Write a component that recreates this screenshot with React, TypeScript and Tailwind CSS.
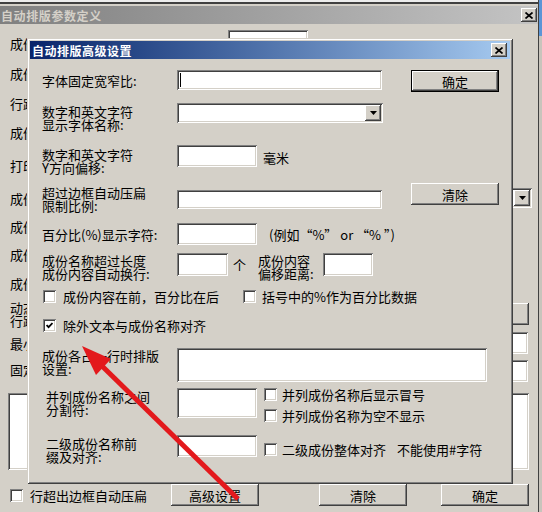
import React from 'react';

// Win2000 style 3D edges
const sunken =
  'bg-white shadow-[inset_1px_1px_0_#808080,inset_-1px_-1px_0_#ffffff,inset_2px_2px_0_#404040,inset_-2px_-2px_0_#d4d0c8]';
const raised =
  'bg-[#d4d0c8] shadow-[inset_-1px_-1px_0_#404040,inset_1px_1px_0_#ffffff,inset_-2px_-2px_0_#808080,inset_2px_2px_0_#d4d0c8]';

function CloseBtn() {
  return (
    <div className={`w-[16px] h-[14px] flex items-center justify-center ${raised}`}>
      <svg width="8" height="7" viewBox="0 0 8 7">
        <path d="M0.5 0.5L7.5 6.5M7.5 0.5L0.5 6.5" stroke="#000" strokeWidth="1.7" />
      </svg>
    </div>
  );
}

function DropBtn() {
  return (
    <div className={`w-[16px] h-[16px] flex items-center justify-center ${raised}`}>
      <svg width="7" height="4" viewBox="0 0 7 4">
        <polygon points="0,0 7,0 3.5,4" fill="#000" />
      </svg>
    </div>
  );
}

function Check({ checked, className }: { checked?: boolean; className?: string }) {
  return (
    <div className={`w-[13px] h-[13px] shrink-0 flex items-center justify-center ${sunken} ${className ?? ''}`}>
      {checked && (
        <svg width="7" height="7" viewBox="0 0 7 7">
          <path d="M0.6 3L2.6 5.2L6.5 1" stroke="#000" strokeWidth="1.8" fill="none" />
        </svg>
      )}
    </div>
  );
}

function Btn({ children, className, def }: { children: React.ReactNode; className?: string; def?: boolean }) {
  return (
    <div
      className={`shrink-0 flex items-center justify-center ${raised} ${def ? 'border border-black' : ''} ${className ?? ''}`}
    >
      {children}
    </div>
  );
}

function BackWindow() {
  return (
    <div className="w-[539px] h-full flex flex-col border-r border-[#404040] bg-[#d4d0c8]">
      <div className="h-[2px] bg-[#ececec]" />
      <div className="h-[2px] bg-[#404040]" />
      <div className="h-[2px] bg-[#d4d0c8]" />
      <div className="h-[18px] flex items-center justify-between pl-[1px] pr-[1px] bg-linear-to-r from-[#808080] to-[#c4c4c4]">
        <span className="text-[#d4d0c8] font-bold text-[12px] tracking-[0.6px]">自动排版参数定义</span>
        <CloseBtn />
      </div>

      <div className="flex flex-col pl-[10px] pr-[9px] mt-[5px]">
        <div className="h-[30px] flex items-start">
          <div className="w-[218px] mt-[8px]">成份名称与成份内容间距:</div>
          <div className={`w-[80px] h-[22px] mt-[1px] ${sunken}`} />
        </div>
        <div className="h-[29px] flex items-center">成份名称字体</div>
        <div className="h-[30px] flex items-center">行距</div>
        <div className="h-[28px] flex items-center">成份内容字体</div>
        <div className="h-[38px] flex items-center">打印时换行</div>
        <div className="h-[28px] flex items-center justify-between">
          <span>成份对齐方式</span>
          <div className={`w-[120px] h-[20px] mr-[-3px] flex justify-end p-[2px] ${sunken}`}>
            <DropBtn />
          </div>
        </div>
        <div className="h-[28px] flex items-center">成份间距</div>
        <div className="h-[28px] flex items-center">成份缩进</div>
        <div className="h-[30px] flex items-center">成份名称宽度</div>
        <div className="h-[32px] flex items-center justify-between">
          <span>
            动态排版
            <br />
            行距调整
          </span>
          <Btn className="w-[88px] h-[22px]">设置</Btn>
        </div>
        <div className="h-[26px] flex items-center justify-between">
          <span>最小行距</span>
          <div className={`w-[80px] h-[22px] mr-[1px] ${sunken}`} />
        </div>
        <div className="h-[27px] flex items-center justify-between">
          <span>固定行距</span>
          <div className={`w-[80px] h-[22px] mr-[1px] mt-[3px] ${sunken}`} />
        </div>
        <div className={`mt-[10px] ml-[-2px] h-[77px] ${sunken}`} />
        <div className="mt-[14px] h-[22px] flex items-center">
          <div className="w-[167px] flex items-center">
            <Check />
            <span className="ml-[7px]">行超出边框自动压扁</span>
          </div>
          <Btn className="w-[88px] h-[22px]">高级设置</Btn>
          <Btn className="ml-[60px] w-[88px] h-[22px]">清除</Btn>
          <Btn className="ml-[34px] w-[88px] h-[22px]">确定</Btn>
        </div>
      </div>
    </div>
  );
}

function AdvancedDialog() {
  return (
    <div className="absolute left-[27px] top-[38px] w-[486px] h-[446px] p-[3px] bg-[#d4d0c8] shadow-[inset_1px_1px_0_#d4d0c8,inset_-1px_-1px_0_#404040,inset_2px_2px_0_#ffffff,inset_-2px_-2px_0_#808080]">
      <div className="h-[18px] flex items-center justify-between pl-[2px] pr-[3px] bg-linear-to-r from-[#0a246a] to-[#a6caf0]">
        <span className="text-white font-bold text-[12px] tracking-[0.5px]">自动排版高级设置</span>
        <CloseBtn />
      </div>

      <div className="flex flex-col pl-[12px]">
        <div className="mt-[11px] h-[22px] flex items-start">
          <div className="w-[135px] shrink-0 mt-[4px]">字体固定宽窄比:</div>
          <div className={`w-[205px] h-[20px] flex items-center pl-[3px] ${sunken}`}>
            <div className="w-[1px] h-[14px] bg-black" />
          </div>
          <Btn def className="ml-[29px] w-[88px] h-[22px]">确定</Btn>
        </div>

        <div className="mt-[11px] h-[27px] flex items-start">
          <div className="w-[135px] shrink-0 mt-[2px]">
            数字和英文字符
            <br />
            显示字体名称:
          </div>
          <div className={`w-[206px] h-[20px] flex justify-end p-[2px] ${sunken}`}>
            <DropBtn />
          </div>
        </div>

        <div className="mt-[15px] h-[28px] flex items-start">
          <div className="w-[135px] shrink-0 mt-[3px]">
            数字和英文字符
            <br />
            Y方向偏移:
          </div>
          <div className={`w-[80px] h-[22px] ${sunken}`} />
          <span className="ml-[6px] h-[24px] flex items-center">毫米</span>
        </div>

        <div className="mt-[10px] h-[28px] flex items-start">
          <div className="w-[135px] shrink-0 mt-[3px]">
            超过边框自动压扁
            <br />
            限制比例:
          </div>
          <div className={`w-[205px] h-[19px] mt-[7px] ${sunken}`} />
          <Btn className="ml-[29px] w-[88px] h-[22px]">清除</Btn>
        </div>

        <div className="mt-[12px] h-[22px] flex items-center">
          <div className="w-[135px] shrink-0">百分比(%)显示字符:</div>
          <div className={`w-[80px] h-[22px] ${sunken}`} />
          <span className="ml-[12px]">(例如“%” or “% ”)</span>
        </div>

        <div className="mt-[8px] h-[25px] flex items-start">
          <div className="w-[135px] shrink-0 mt-[1px]">
            成份名称超过长度
            <br />
            成份内容自动换行:
          </div>
          <div className={`w-[51px] h-[23px] ${sunken}`} />
          <span className="ml-[5px] h-[23px] flex items-center">个</span>
          <div className="ml-[12px] w-[65px] mt-[1px]">
            成份内容
            <br />
            偏移距离:
          </div>
          <div className={`w-[50px] h-[23px] ${sunken}`} />
        </div>

        <div className="mt-[12px] h-[13px] flex items-center">
          <div className="w-[201px] flex items-center">
            <Check className="ml-[1px]" />
            <span className="ml-[7px]">成份内容在前，百分比在后</span>
          </div>
          <Check />
          <span className="ml-[6px]">括号中的%作为百分比数据</span>
        </div>

        <div className="mt-[16px] h-[13px] flex items-center">
          <Check checked className="ml-[1px]" />
          <span className="ml-[7px]">除外文本与成份名称对齐</span>
        </div>

        <div className="mt-[16px] h-[34px] flex items-start">
          <div className="w-[135px] shrink-0 mt-[1px]">
            成份各占一行时排版
            <br />
            设置:
          </div>
          <div className={`w-[310px] h-[34px] ${sunken}`} />
        </div>

        <div className="mt-[6px] h-[33px] flex items-start">
          <div className="w-[135px] shrink-0 pl-[4px] mt-[2px]">
            并列成份名称之间
            <br />
            分割符:
          </div>
          <div className={`w-[80px] h-[30px] ${sunken}`} />
          <div className="ml-[7px] flex flex-col gap-[8px]">
            <div className="flex items-center">
              <Check />
              <span className="ml-[5px]">并列成份名称后显示冒号</span>
            </div>
            <div className="flex items-center">
              <Check />
              <span className="ml-[5px]">并列成份名称为空不显示</span>
            </div>
          </div>
        </div>

        <div className="mt-[14px] flex items-start">
          <div className="w-[135px] shrink-0 pl-[4px] mt-[2px]">
            二级成份名称前
            <br />
            缀及对齐:
          </div>
          <div className={`w-[80px] h-[22px] ${sunken}`} />
          <div className="ml-[7px] mt-[8px] flex items-center">
            <Check />
            <span className="ml-[5px]">二级成份整体对齐</span>
            <span className="ml-[11px]">不能使用#字符</span>
          </div>
        </div>
      </div>
    </div>
  );
}

export default function App() {
  return (
    <div className="relative w-[542px] h-[512px] overflow-hidden flex bg-[#d4d0c8] text-black text-[13px] leading-[13px] font-['Noto_Sans_CJK_SC',sans-serif]">
      <BackWindow />
      <div className="flex-1 flex flex-col">
        <div className="h-[36px] bg-[#5b95d6]" />
        <div className="flex-1 bg-[#c8c4bc]" />
      </div>

      <AdvancedDialog />

      {/* red annotation arrow */}
      <svg className="absolute inset-0 pointer-events-none" width="542" height="512" viewBox="0 0 542 512">
        <line x1="238" y1="499" x2="102" y2="366" stroke="#e3191c" strokeWidth="5" />
        <polygon points="82,346 111,359 96,375" fill="#e3191c" />
      </svg>
    </div>
  );
}
